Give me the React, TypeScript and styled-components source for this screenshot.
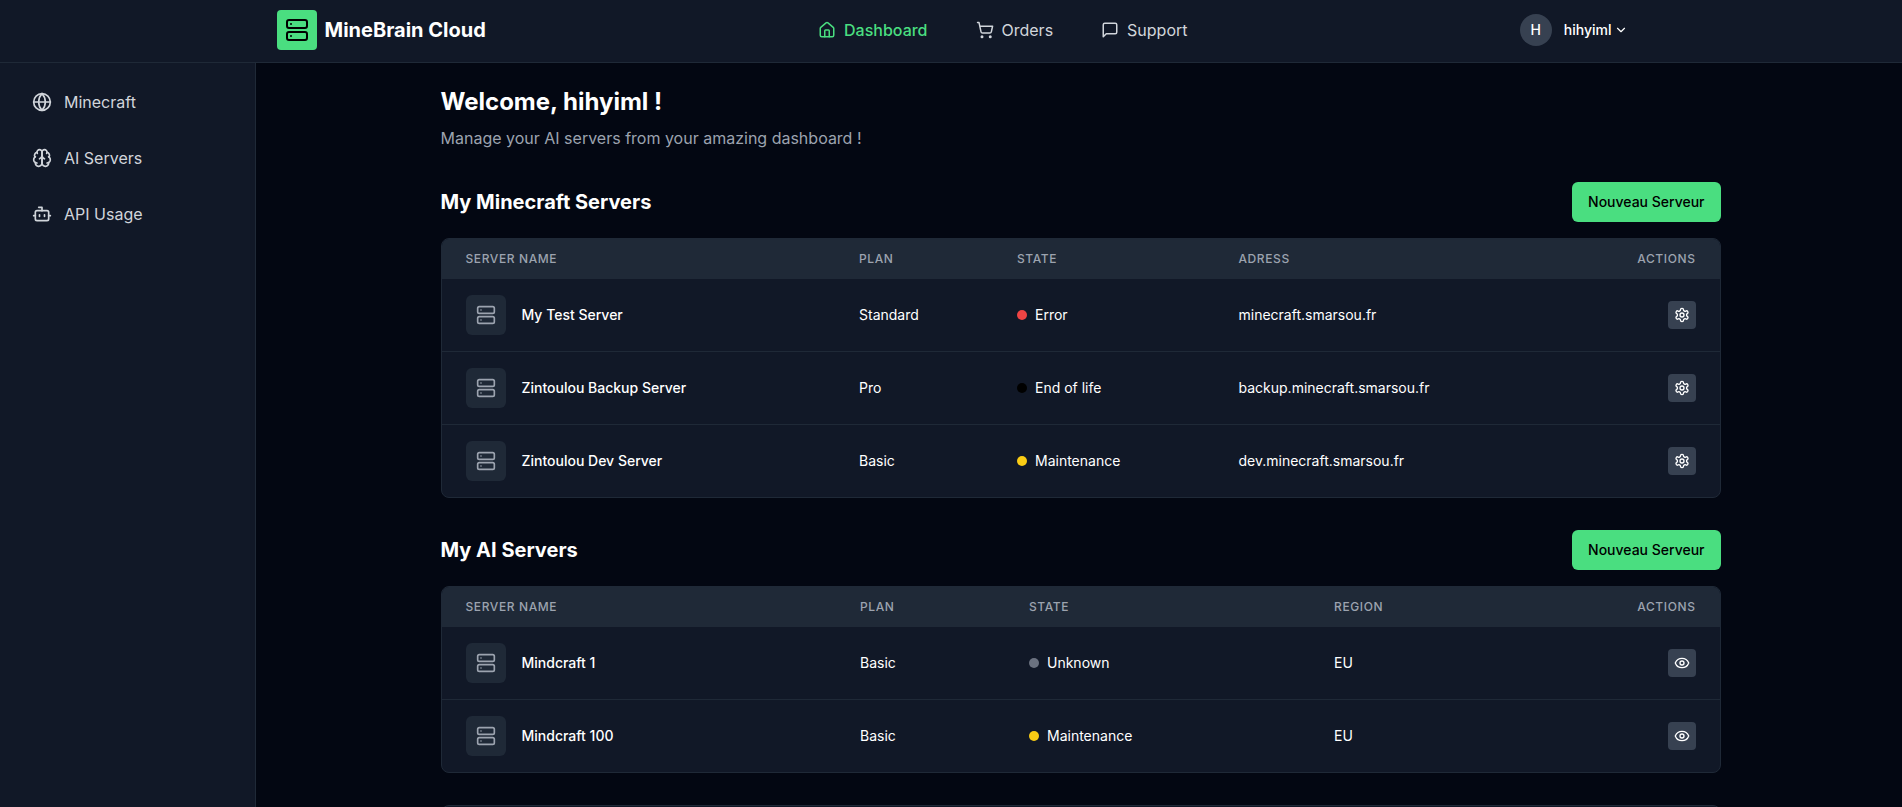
import React from "react";
import styled, { createGlobalStyle } from "styled-components";
import { Bot, ChevronDown, Eye, Globe, House, Server, ShoppingCart } from "lucide-react";

const GlobalStyle = createGlobalStyle`
  *, *::before, *::after { box-sizing: border-box; }
  body {
    margin: 0;
    background: #030712;
    color: #fff;
    font-family: Inter, "Liberation Sans", sans-serif;
    font-size: 16px;
    line-height: 24px;
  }
  h1, h2, p { margin: 0; }
  button { font: inherit; border: 0; cursor: pointer; }
  a { color: inherit; text-decoration: none; }
  svg { display: block; flex-shrink: 0; }
`;

const Page = styled.div`
  height: 100vh;
  display: flex;
  flex-direction: column;
  overflow: hidden;
`;

const Header = styled.header`
  height: 63px;
  flex-shrink: 0;
  padding: 0 273.5px 2px 276.5px;
  display: flex;
  justify-content: space-between;
  align-items: center;
  background: #111827;
  border-bottom: 1px solid #1f2937;
`;

const Brand = styled.a`
  display: flex;
  align-items: center;
  gap: 8px;
  font-size: 20px;
  line-height: 28px;
  font-weight: 700;
`;

const BrandMark = styled.span`
  width: 40px;
  height: 40px;
  display: grid;
  place-items: center;
  border-radius: 4px;
  background: #4ade80;
  color: #000;
`;

const TopNav = styled.nav`
  display: flex;
  gap: 48px;
`;

const TopLink = styled.a<{ $active?: boolean }>`
  display: flex;
  align-items: center;
  gap: 8px;
  font-weight: ${(p) => (p.$active ? 500 : 400)};
  color: ${(p) => (p.$active ? "#4ade80" : "#d1d5db")};
`;

const Account = styled.button`
  display: flex;
  align-items: center;
  padding: 0;
  background: none;
  color: #fff;
  font-size: 14px;
  line-height: 20px;
  font-weight: 500;
`;

const Avatar = styled.span`
  width: 32px;
  height: 32px;
  margin-right: 12px;
  display: grid;
  place-items: center;
  border-radius: 50%;
  background: #374151;
`;

const Caret = styled(ChevronDown)`
  margin-left: 3px;
`;

const Body = styled.div`
  flex: 1;
  min-height: 0;
  display: flex;
`;

const Sidebar = styled.aside`
  width: 256px;
  flex-shrink: 0;
  padding: 15px 16px;
  display: flex;
  flex-direction: column;
  gap: 8px;
  background: #111827;
  border-right: 1px solid #1f2937;
`;

const SideLink = styled.a`
  height: 48px;
  padding: 0 16px;
  display: flex;
  align-items: center;
  gap: 12px;
  color: #d1d5db;
`;

const Main = styled.main`
  flex: 1;
  min-width: 0;
  padding: 23px 181.5px 0 184.5px;
`;

const Title = styled.h1`
  font-size: 24px;
  line-height: 32px;
  font-weight: 700;
`;

const Subtitle = styled.p`
  margin-top: 8px;
  color: #9ca3af;
`;

const Section = styled.section`
  margin-top: 32px;
`;

const SectionHead = styled.div`
  height: 40px;
  margin-bottom: 16px;
  display: flex;
  align-items: center;
  justify-content: space-between;
`;

const SectionTitle = styled.h2`
  font-size: 20px;
  line-height: 28px;
  font-weight: 700;
`;

const NewButton = styled.button`
  height: 40px;
  padding: 0 16px;
  border-radius: 6px;
  background: #4ade80;
  color: #000;
  font-size: 14px;
  line-height: 20px;
  font-weight: 500;
`;

const Card = styled.div`
  overflow: hidden;
  min-height: 40px;
  border: 1px solid #1f2937;
  border-radius: 8px;
  background: #111827;
`;

const Table = styled.table`
  width: 100%;
  table-layout: fixed;
  border-collapse: separate;
  border-spacing: 0;
  font-size: 14px;
  line-height: 20px;
`;

const Col = styled.col<{ $width?: number }>`
  width: ${(p) => (p.$width ? `${p.$width}px` : "auto")};
`;

const HeadCell = styled.th<{ $end?: boolean }>`
  height: 40px;
  padding: 0 24px;
  background: #1f2937;
  color: #9ca3af;
  font-size: 12px;
  line-height: 16px;
  font-weight: 500;
  letter-spacing: 0.6px;
  text-align: ${(p) => (p.$end ? "right" : "left")};
  text-transform: uppercase;
`;

const Row = styled.tr`
  & + & > td {
    height: 73px;
    border-top: 1px solid #1f2937;
  }
`;

const Cell = styled.td`
  height: 72px;
  padding: 0 24px;
  white-space: nowrap;
`;

const NameGroup = styled.div`
  display: flex;
  align-items: center;
  gap: 16px;
  font-weight: 500;
`;

const ServerTile = styled.span`
  width: 40px;
  height: 40px;
  display: grid;
  place-items: center;
  border-radius: 6px;
  background: #1f2937;
  color: #9ca3af;
`;

const State = styled.div`
  display: flex;
  align-items: center;
  gap: 8px;
`;

const Dot = styled.span<{ $color: string }>`
  width: 10px;
  height: 10px;
  border-radius: 50%;
  background: ${(p) => p.$color};
`;

const ActionButton = styled.button`
  width: 28px;
  height: 28px;
  margin-left: auto;
  padding: 0;
  display: grid;
  place-items: center;
  border-radius: 4px;
  background: #374151;
  color: #fff;
`;

interface IconProps {
  size: number;
}

function LineIcon({ size, children }: IconProps & { children: React.ReactNode }) {
  return (
    <svg
      width={size}
      height={size}
      viewBox="0 0 24 24"
      fill="none"
      stroke="currentColor"
      strokeWidth={2}
      strokeLinecap="round"
      strokeLinejoin="round"
    >
      {children}
    </svg>
  );
}

function GearIcon({ size }: IconProps) {
  return (
    <LineIcon size={size}>
      <path d="M12.22 2h-.44a2 2 0 0 0-2 2v.18a2 2 0 0 1-1 1.73l-.43.25a2 2 0 0 1-2 0l-.15-.08a2 2 0 0 0-2.73.73l-.22.38a2 2 0 0 0 .73 2.73l.15.1a2 2 0 0 1 1 1.72v.51a2 2 0 0 1-1 1.74l-.15.09a2 2 0 0 0-.73 2.73l.22.38a2 2 0 0 0 2.73.73l.15-.08a2 2 0 0 1 2 0l.43.25a2 2 0 0 1 1 1.73V20a2 2 0 0 0 2 2h.44a2 2 0 0 0 2-2v-.18a2 2 0 0 1 1-1.73l.43-.25a2 2 0 0 1 2 0l.15.08a2 2 0 0 0 2.73-.73l.22-.39a2 2 0 0 0-.73-2.73l-.15-.08a2 2 0 0 1-1-1.74v-.5a2 2 0 0 1 1-1.74l.15-.09a2 2 0 0 0 .73-2.73l-.22-.38a2 2 0 0 0-2.73-.73l-.15.08a2 2 0 0 1-2 0l-.43-.25a2 2 0 0 1-1-1.73V4a2 2 0 0 0-2-2z" />
      <circle cx="12" cy="12" r="3" />
    </LineIcon>
  );
}

function BubbleIcon({ size }: IconProps) {
  return (
    <LineIcon size={size}>
      <path d="M21 15a2 2 0 0 1-2 2H7l-4 4V5a2 2 0 0 1 2-2h14a2 2 0 0 1 2 2z" />
    </LineIcon>
  );
}

function BrainIcon({ size }: IconProps) {
  return (
    <LineIcon size={size}>
      <path d="M12 5a3 3 0 1 0-5.997.125 4 4 0 0 0-2.526 5.77 4 4 0 0 0 .556 6.588A4 4 0 1 0 12 18Z" />
      <path d="M12 5a3 3 0 1 1 5.997.125 4 4 0 0 1 2.526 5.77 4 4 0 0 1-.556 6.588A4 4 0 1 1 12 18Z" />
      <path d="M15 13a4.5 4.5 0 0 1-3-4 4.5 4.5 0 0 1-3 4" />
      <path d="M17.599 6.5a3 3 0 0 0 .399-1.375" />
      <path d="M6.003 5.125A3 3 0 0 0 6.401 6.5" />
      <path d="M3.477 10.896a4 4 0 0 1 .585-.396" />
      <path d="M19.938 10.5a4 4 0 0 1 .585.396" />
      <path d="M6 18a4 4 0 0 1-1.967-.516" />
      <path d="M19.967 17.484A4 4 0 0 1 18 18" />
    </LineIcon>
  );
}

type Status = "Error" | "End of life" | "Maintenance" | "Unknown";

const statusColors: Record<Status, string> = {
  Error: "#ef4444",
  "End of life": "#000",
  Maintenance: "#facc15",
  Unknown: "#6b7280",
};

interface ServerRow {
  name: string;
  plan: string;
  state: Status;
  place: string;
}

interface ServerSectionProps {
  title: string;
  placeLabel: string;
  widths: number[];
  rows: ServerRow[];
  action: React.ReactNode;
}

const minecraftServers: ServerRow[] = [
  { name: "My Test Server", plan: "Standard", state: "Error", place: "minecraft.smarsou.fr" },
  { name: "Zintoulou Backup Server", plan: "Pro", state: "End of life", place: "backup.minecraft.smarsou.fr" },
  { name: "Zintoulou Dev Server", plan: "Basic", state: "Maintenance", place: "dev.minecraft.smarsou.fr" },
];

const aiServers: ServerRow[] = [
  { name: "Mindcraft 1", plan: "Basic", state: "Unknown", place: "EU" },
  { name: "Mindcraft 100", plan: "Basic", state: "Maintenance", place: "EU" },
];

function ServerSection({ title, placeLabel, widths, rows, action }: ServerSectionProps) {
  return (
    <Section>
      <SectionHead>
        <SectionTitle>{title}</SectionTitle>
        <NewButton>Nouveau Serveur</NewButton>
      </SectionHead>
      <Card>
        <Table>
          <colgroup>
            {widths.map((w, i) => (
              <Col key={i} $width={w} />
            ))}
            <Col />
          </colgroup>
          <thead>
            <tr>
              <HeadCell>Server name</HeadCell>
              <HeadCell>Plan</HeadCell>
              <HeadCell>State</HeadCell>
              <HeadCell>{placeLabel}</HeadCell>
              <HeadCell $end>Actions</HeadCell>
            </tr>
          </thead>
          <tbody>
            {rows.map((row) => (
              <Row key={row.name}>
                <Cell>
                  <NameGroup>
                    <ServerTile>
                      <Server size={20} />
                    </ServerTile>
                    {row.name}
                  </NameGroup>
                </Cell>
                <Cell>{row.plan}</Cell>
                <Cell>
                  <State>
                    <Dot $color={statusColors[row.state]} />
                    {row.state}
                  </State>
                </Cell>
                <Cell>{row.place}</Cell>
                <Cell>
                  <ActionButton>{action}</ActionButton>
                </Cell>
              </Row>
            ))}
          </tbody>
        </Table>
      </Card>
    </Section>
  );
}

export default function App() {
  return (
    <Page>
      <GlobalStyle />
      <Header>
        <Brand href="#">
          <BrandMark>
            <Server size={24} />
          </BrandMark>
          MineBrain Cloud
        </Brand>
        <TopNav>
          <TopLink href="#" $active>
            <House size={18} />
            Dashboard
          </TopLink>
          <TopLink href="#">
            <ShoppingCart size={18} />
            Orders
          </TopLink>
          <TopLink href="#">
            <BubbleIcon size={18} />
            Support
          </TopLink>
        </TopNav>
        <Account>
          <Avatar>H</Avatar>
          hihyiml
          <Caret size={14} />
        </Account>
      </Header>
      <Body>
        <Sidebar>
          <SideLink href="#">
            <Globe size={20} />
            Minecraft
          </SideLink>
          <SideLink href="#">
            <BrainIcon size={20} />
            AI Servers
          </SideLink>
          <SideLink href="#">
            <Bot size={20} />
            API Usage
          </SideLink>
        </Sidebar>
        <Main>
          <Title>Welcome, hihyiml !</Title>
          <Subtitle>Manage your AI servers from your amazing dashboard !</Subtitle>
          <ServerSection
            title="My Minecraft Servers"
            placeLabel="Adress"
            widths={[393.5, 158, 221.5, 300]}
            rows={minecraftServers}
            action={<GearIcon size={16} />}
          />
          <ServerSection
            title="My AI Servers"
            placeLabel="Region"
            widths={[394.5, 169, 305, 200]}
            rows={aiServers}
            action={<Eye size={16} />}
          />
          <Section>
            <Card />
          </Section>
        </Main>
      </Body>
    </Page>
  );
}
